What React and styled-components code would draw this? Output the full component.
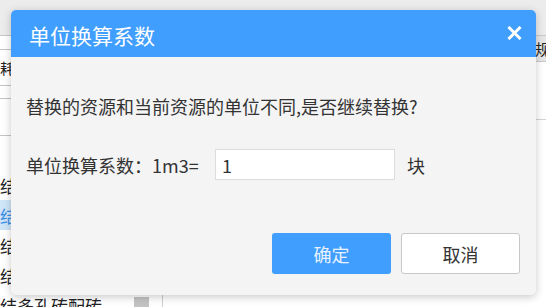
import styled, { createGlobalStyle } from "styled-components";

const GlobalStyle = createGlobalStyle`
  html, body {
    margin: 0;
    padding: 0;
    background: #ececec;
    font-family: "Noto Sans CJK SC", "Liberation Sans", sans-serif;
  }
`;

const Page = styled.div`
  position: relative;
  width: 546px;
  height: 307px;
  overflow: hidden;
  background: #ececec;
`;

const TopBar = styled.div`
  height: 36px;
  background: #ececec;
  border-bottom: 1px solid #c9c9c9;
  box-sizing: border-box;
`;

const Main = styled.div`
  display: grid;
  grid-template-columns: 163px 1fr;
  height: 271px;
  background: #fff;
`;

const LeftPanel = styled.div`
  display: flex;
  flex-direction: column;
  border-right: 1px solid #cfcfcf;
  box-sizing: border-box;
  overflow: hidden;
`;

const Cell = styled.div`
  height: ${(p) => p.$h}px;
  flex: none;
  border-bottom: ${(p) => (p.$line ? "1px solid #c4c4c4" : "none")};
  box-sizing: border-box;
  display: flex;
  align-items: center;
  font-size: 15px;
  color: #222;
  white-space: nowrap;
  overflow: hidden;
`;

const ListArea = styled.div`
  display: grid;
  grid-template-columns: 1fr 15px 13px;
  flex: 1;
  min-height: 0;
`;

const List = styled.div`
  display: flex;
  flex-direction: column;
  padding-top: 34px;
  overflow: hidden;
`;

const ListRow = styled.div`
  height: 30px;
  flex: none;
  display: flex;
  align-items: center;
  font-size: 17px;
  white-space: nowrap;
  color: ${(p) => (p.$active ? "#3a8ee6" : "#222")};
  background: ${(p) => (p.$active ? "#cfe6f8" : "transparent")};
`;

const ScrollTrack = styled.div`
  display: flex;
  flex-direction: column;
  justify-content: flex-end;
`;

const ScrollThumb = styled.div`
  height: 10px;
  background: #c3c3c3;
`;

const RightPanel = styled.div`
  display: flex;
  flex-direction: column;
`;

const HeadRow = styled.div`
  display: grid;
  grid-template-columns: 372px 1fr;
  height: 26px;
  background: #e6e6e6;
  border-bottom: 1px solid #c9c9c9;
  box-sizing: border-box;
`;

const HeadCell = styled.div`
  display: flex;
  align-items: center;
  font-size: 15px;
  color: #222;
  white-space: nowrap;
  overflow: hidden;
`;

const BodyRow = styled.div`
  height: 58px;
  border-bottom: 1px solid #d4d4d4;
  box-sizing: border-box;
`;

const Dialog = styled.div`
  position: absolute;
  left: 11px;
  top: 10px;
  width: 525px;
  height: 285px;
  display: flex;
  flex-direction: column;
  background: #f4f4f4;
  border-radius: 5px;
  overflow: hidden;
  box-shadow: 0 2px 8px rgba(0, 0, 0, 0.22);
`;

const Header = styled.div`
  height: 47px;
  flex: none;
  display: flex;
  align-items: center;
  justify-content: space-between;
  padding: 2px 14px 0 18px;
  box-sizing: border-box;
  background: #409eff;
  color: #fff;
  font-size: 21px;
`;

const CloseButton = styled.button`
  border: none;
  background: none;
  padding: 0;
  display: flex;
  cursor: pointer;
  margin-top: -3px;
`;

const Body = styled.div`
  flex: 1;
  display: flex;
  flex-direction: column;
  padding: 37px 16px 21px 15px;
  color: #333;
  font-size: 18px;
`;

const Message = styled.div`
  line-height: 24px;
  white-space: nowrap;
`;

const FieldRow = styled.div`
  display: flex;
  align-items: center;
  margin-top: 31px;
`;

const Label = styled.span`
  width: 189px;
  flex: none;
  white-space: nowrap;
`;

const Input = styled.input`
  width: 180px;
  height: 31px;
  flex: none;
  box-sizing: border-box;
  border: 1px solid #dcdcdc;
  background: #fff;
  padding: 0 6px;
  font-family: inherit;
  font-size: 18px;
  color: #333;
  outline: none;
`;

const Unit = styled.span`
  margin-left: 12px;
`;

const Footer = styled.div`
  margin-top: auto;
  display: flex;
  justify-content: flex-end;
  gap: 10px;
`;

const Button = styled.button`
  width: 119px;
  height: 41px;
  box-sizing: border-box;
  border-radius: 3px;
  font-family: inherit;
  font-size: 18px;
  cursor: pointer;
  border: ${(p) => (p.$primary ? "none" : "1px solid #c8c8c8")};
  background: ${(p) => (p.$primary ? "#409eff" : "#fff")};
  color: ${(p) => (p.$primary ? "#e8f2ff" : "#333")};
`;

const listItems = ["结多孔砖", "结多孔砖", "结多孔砖", "结多孔砖", "结多孔砖配砖"];

export default function App() {
  return (
    <>
      <GlobalStyle />
      <Page>
        <TopBar />
        <Main>
          <LeftPanel>
            <Cell $h={14} $line />
            <Cell $h={36} $line>耗量</Cell>
            <Cell $h={13} $line />
            <Cell $h={37} $line />
            <ListArea>
              <List>
                {listItems.map((t, i) => (
                  <ListRow key={i} $active={i === 1}>
                    {t}
                  </ListRow>
                ))}
              </List>
              <ScrollTrack>
                <ScrollThumb />
              </ScrollTrack>
              <div />
            </ListArea>
          </LeftPanel>
          <RightPanel>
            <HeadRow>
              <HeadCell>名称</HeadCell>
              <HeadCell>规格</HeadCell>
            </HeadRow>
            <BodyRow />
          </RightPanel>
        </Main>

        <Dialog>
          <Header>
            <span>单位换算系数</span>
            <CloseButton aria-label="关闭">
              <svg width="15" height="14" viewBox="0 0 15 14">
                <path
                  d="M2.5 2 L12.5 12 M12.5 2 L2.5 12"
                  stroke="#fff"
                  strokeWidth="3"
                  strokeLinecap="square"
                />
              </svg>
            </CloseButton>
          </Header>
          <Body>
            <Message>替换的资源和当前资源的单位不同,是否继续替换?</Message>
            <FieldRow>
              <Label>单位换算系数：1m3=</Label>
              <Input defaultValue="1" />
              <Unit>块</Unit>
            </FieldRow>
            <Footer>
              <Button $primary>确定</Button>
              <Button>取消</Button>
            </Footer>
          </Body>
        </Dialog>
      </Page>
    </>
  );
}
